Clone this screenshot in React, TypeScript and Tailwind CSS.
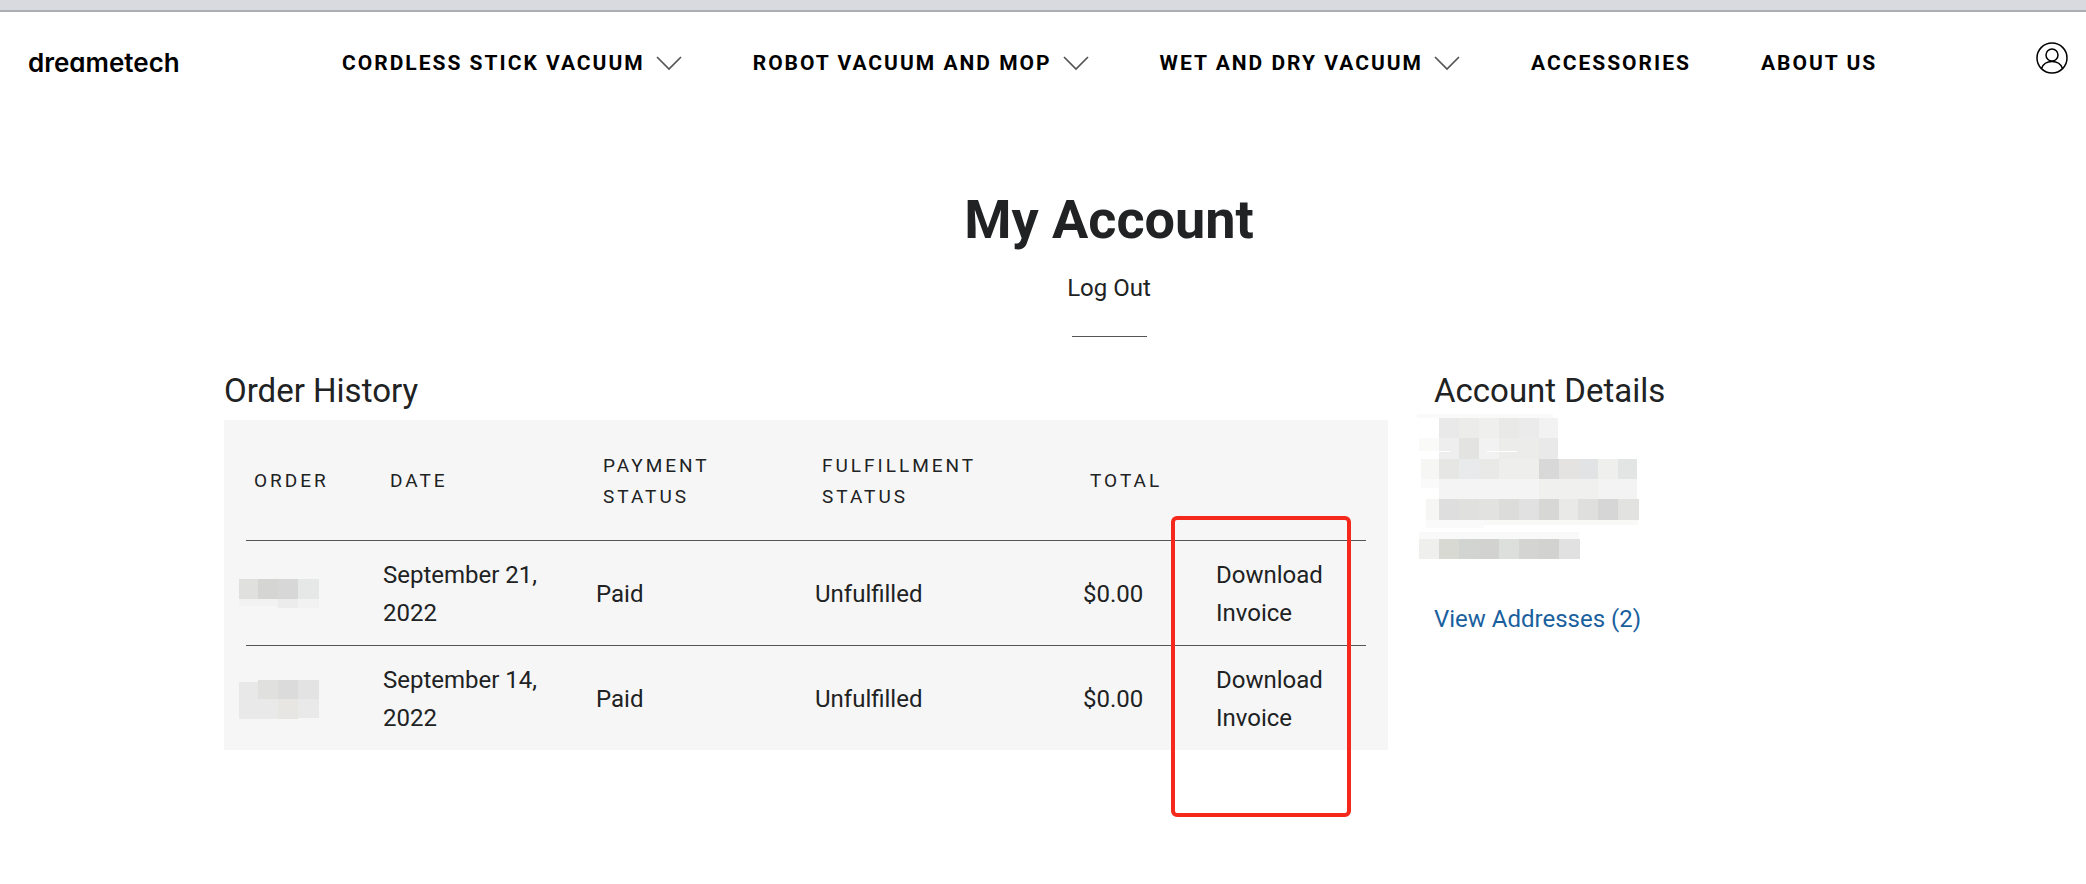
const NAV_LINKS = [
  { label: "Cordless Stick Vacuum", menu: true },
  { label: "Robot Vacuum and Mop", menu: true },
  { label: "Wet and Dry Vacuum", menu: true },
  { label: "Accessories", menu: false },
  { label: "About Us", menu: false },
];

const ORDERS = [
  { date: "September 21, 2022", payment: "Paid", fulfillment: "Unfulfilled", total: "$0.00" },
  { date: "September 14, 2022", payment: "Paid", fulfillment: "Unfulfilled", total: "$0.00" },
];

// each entry: x, y, width, height, fill
type Block = [number, number, number, number, string];

const ORDER_MASKS: Block[][] = [
  [
    [1, 9, 19, 20, "#e0e0de"], [20, 9, 20, 20, "#d5d5d4"], [40, 9, 20, 20, "#d7d7d7"], [60, 9, 21, 20, "#e6e8e7"],
    [1, 29, 39, 7, "#f2f2f2"], [40, 29, 20, 9, "#ececec"], [60, 29, 21, 9, "#f2f2f2"],
  ],
  [
    [1, 7, 19, 17, "#e8e8e8"], [20, 5, 20, 19, "#e0e0df"], [40, 5, 20, 19, "#dbdbdb"], [60, 5, 21, 19, "#e3e3e3"],
    [1, 24, 39, 20, "#e9e9e9"], [40, 24, 20, 20, "#e7e6e3"], [60, 24, 21, 19, "#e9e9e9"],
  ],
];

const DETAIL_MASK: Block[] = [
  [17, 0, 136, 4, "#fafafa"],
  [39, 4, 20, 20, "#e9e9e9"], [59, 4, 20, 20, "#ececea"], [79, 4, 20, 20, "#efefee"], [99, 4, 20, 20, "#e9e9e8"], [119, 4, 20, 20, "#ebebeb"], [139, 4, 19, 20, "#f2f2f2"],
  [19, 24, 20, 13, "#fafaf8"], [39, 24, 20, 21, "#eeeeee"], [59, 24, 20, 21, "#e3e3e1"], [79, 24, 20, 21, "#f2f2f2"], [99, 24, 40, 21, "#ececeb"], [139, 24, 19, 21, "#e9e9e9"],
  [21, 45, 18, 20, "#f6f6f5"], [39, 45, 20, 20, "#e6e6e4"], [59, 45, 20, 20, "#e9eaec"], [79, 45, 20, 20, "#e9e9e8"], [99, 45, 40, 20, "#eeeeed"], [139, 45, 20, 20, "#d8d8d9"], [159, 45, 20, 20, "#e5e3e2"], [179, 45, 19, 20, "#e2e3e4"], [198, 45, 20, 20, "#efefee"], [218, 45, 19, 20, "#e2e5e4"],
  [21, 65, 18, 9, "#fafafa"], [39, 65, 100, 20, "#f4f4f4"], [139, 65, 59, 20, "#f0f0ef"], [198, 65, 39, 20, "#f3f3f3"],
  [26, 85, 13, 21, "#f6f6f5"], [39, 85, 20, 21, "#dededf"], [59, 85, 20, 21, "#e0e0de"], [79, 85, 20, 21, "#e2e2e1"], [99, 85, 20, 21, "#dcdcdb"], [119, 85, 20, 21, "#e1e1e2"], [139, 85, 20, 21, "#d7d7d5"], [159, 85, 19, 21, "#e9e9e8"], [178, 85, 20, 21, "#dfdfdd"], [198, 85, 20, 21, "#d6d6d7"], [218, 85, 21, 21, "#e2e2e1"],
  [26, 106, 58, 8, "#fafafa"], [84, 106, 154, 5, "#f9f9f8"],
  [21, 37, 29, 1, "#ffffff"], [87, 37, 30, 1, "#ffffff"],
  [19, 118, 160, 7, "#f9f9f9"],
  [19, 125, 20, 20, "#efefee"], [39, 125, 20, 20, "#d8d9d3"], [59, 125, 20, 20, "#d2d4d1"], [79, 125, 20, 20, "#d2d2d0"], [99, 125, 20, 20, "#dcdfdc"], [119, 125, 20, 20, "#d4d4d2"], [139, 125, 20, 20, "#d2d2d1"], [159, 125, 21, 20, "#e1e1e1"],
];

function Blocks({ blocks, className }: { blocks: Block[]; className: string }) {
  return (
    <svg className={className} shapeRendering="crispEdges" aria-hidden="true">
      {blocks.map(([x, y, w, h, fill], i) => (
        <rect key={i} x={x} y={y} width={w} height={h} fill={fill} />
      ))}
    </svg>
  );
}

function Chevron() {
  return (
    <svg className="h-4 w-7" viewBox="0 0 28 16" fill="none" stroke="#555" strokeWidth="1.7" aria-hidden="true">
      <path d="M2 2 14 14 26 2" />
    </svg>
  );
}

function Header() {
  return (
    <header className="flex h-[102px] items-center pr-[18px] pl-7 text-black">
      <div className="w-[314px] shrink-0">
        <a href="#" className="font-[Inter,sans-serif] text-[26px] font-semibold [font-feature-settings:'cv11']">
          dreametech
        </a>
      </div>
      <nav className="flex items-center gap-[70px]">
        {NAV_LINKS.map((link) =>
          link.menu ? (
            <button key={link.label} className="flex items-center gap-2.5 text-[21px] font-bold tracking-[2px] whitespace-nowrap uppercase">
              {link.label}
              <Chevron />
            </button>
          ) : (
            <a key={link.label} href="#" className="text-[21px] font-bold tracking-[2px] whitespace-nowrap uppercase">
              {link.label}
            </a>
          ),
        )}
      </nav>
      <a href="#" aria-label="Account" className="ml-auto pb-2.5">
        <svg className="size-8" viewBox="0 0 32 32" fill="none" stroke="currentColor" strokeWidth="1.5">
          <circle cx="16" cy="16" r="15" />
          <circle cx="16" cy="13" r="6" />
          <path d="M5.500 26.500C7 22.200 11 19.500 16 19.500s9 2.700 10.500 7" />
        </svg>
      </a>
    </header>
  );
}

function OrderTable() {
  return (
    <div className="relative mt-2.5 bg-[#f6f6f6] px-[22px]">
      <table className="w-full table-fixed border-collapse text-left">
        <colgroup>
          <col className="w-[129px]" />
          <col className="w-[213px]" />
          <col className="w-[219px]" />
          <col className="w-[268px]" />
          <col className="w-[133px]" />
          <col />
        </colgroup>
        <thead>
          <tr className="h-[120px] text-[19px] leading-[31px] tracking-[3px] uppercase">
            <th className="pt-0.5 pl-2 font-normal">Order</th>
            <th className="pt-0.5 pl-[15px] font-normal">Date</th>
            <th className="pt-0.5 pr-16 pl-[15px] font-normal">Payment Status</th>
            <th className="pt-0.5 pr-16 pl-[15px] font-normal">Fulfillment Status</th>
            <th className="pt-0.5 pl-[15px] font-normal">Total</th>
            <td></td>
          </tr>
        </thead>
        <tbody>
          {ORDERS.map((order, i) => (
            <tr key={order.date} className="h-[105px] border-t border-[#555]">
              <td><Blocks blocks={ORDER_MASKS[i]} className="-ml-2 h-[46px] w-[84px]" /></td>
              <td className="pt-0.5 pr-8 pl-2">{order.date}</td>
              <td className="pt-0.5 pl-2">{order.payment}</td>
              <td className="pt-0.5 pl-2">{order.fulfillment}</td>
              <td className="pt-0.5 pl-2">{order.total}</td>
              <td className="pt-0.5 pr-8 pl-2"><a href="#">Download Invoice</a></td>
            </tr>
          ))}
        </tbody>
      </table>
      <div className="pointer-events-none absolute top-24 right-[37px] h-[301px] w-[180px] rounded-md border-4 border-[#f5281c]" />
    </div>
  );
}

export default function App() {
  return (
    <div className="min-h-screen bg-white font-[Roboto,'Liberation_Sans',sans-serif] text-2xl leading-[38px] text-[#202223]">
      <div className="h-3 border-b-2 border-[#adaeb3] bg-[#d9dae0]" />
      <Header />
      <main className="pt-[74px] pr-[92px] pl-56">
        <div className="flex flex-col items-center">
          <h1 className="text-[54px] leading-[64px] font-bold">My Account</h1>
          <a href="#" className="mt-[17px]">Log Out</a>
          <hr className="mt-[29px] w-[75px] border-[#555]" />
        </div>
        <div className="mt-[35px] grid grid-cols-[1164px_1fr] gap-x-[46px]">
          <section>
            <h2 className="text-[33px]">Order History</h2>
            <OrderTable />
          </section>
          <section>
            <h2 className="text-[33px]">Account Details</h2>
            <Blocks blocks={DETAIL_MASK} className="mt-1 -ml-[34px] h-[150px] w-[240px]" />
            <a href="#" className="mt-9 inline-block text-[#1a5f9e]">View Addresses (2)</a>
          </section>
        </div>
      </main>
    </div>
  );
}
